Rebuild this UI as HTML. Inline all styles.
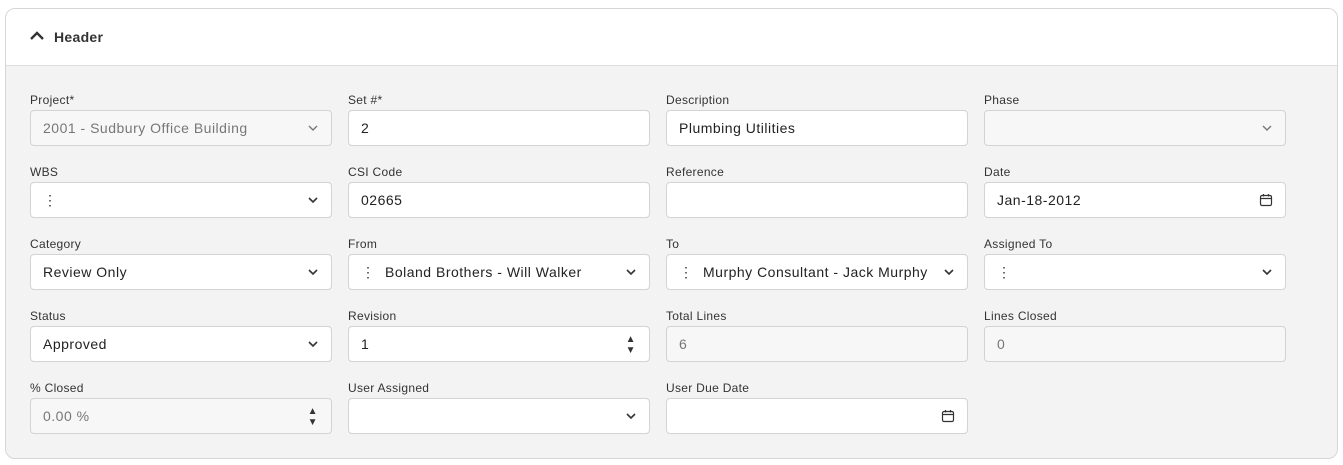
<!DOCTYPE html>
<html><head><style>
*{box-sizing:border-box;margin:0;padding:0}
body{width:1343px;height:465px;background:#fff;font-family:"Liberation Sans",Arial,sans-serif;position:relative;overflow:hidden}
.card{position:absolute;left:5px;top:8px;width:1333px;height:451px;border:1px solid #d6d6d6;border-radius:10px;background:#f3f3f3;overflow:hidden}
.hdr{position:absolute;left:0;top:0;right:0;height:57px;background:#fff;border-bottom:1px solid #dedede}
.hdr span{position:absolute;left:48px;top:20px;font-size:14px;font-weight:bold;color:#333;letter-spacing:0.3px}
.hdr svg{position:absolute;left:23px;top:21px}
.lab{position:absolute;font-size:12px;color:#333;letter-spacing:0.3px}
.inp{position:absolute;width:302px;height:36px;background:#fff;border:1px solid #d3d3d3;border-radius:4px;font-size:14px;color:#222;padding:0 12px;line-height:34px;letter-spacing:0.5px}
.dis{background:#f7f7f7;color:#777}
.chev{position:absolute;right:12px;top:12px}
.dots{display:inline-block;width:10px;margin-right:14px;color:#333}
.spin{position:absolute;right:13px;top:7px;font-size:10px;line-height:11px;color:#333}
.cal{position:absolute;right:12px;top:10px}
</style></head><body>
<div class="card">
<div class="hdr"><svg width="16" height="12" viewBox="0 0 16 12"><path d="M2 9 L8 3 L14 9" stroke="#333" stroke-width="2.4" fill="none"/></svg><span>Header</span></div>
</div>
<div class="lab" style="left:30px;top:93px">Project*</div>
<div class="inp dis" style="left:30px;top:110px">2001 - Sudbury Office Building<svg class="chev" width="12" height="10" viewBox="0 0 12 10"><path d="M2 3 L6 7 L10 3" stroke="#777" stroke-width="1.4" fill="none"/></svg></div>
<div class="lab" style="left:348px;top:93px">Set #*</div>
<div class="inp" style="left:348px;top:110px">2</div>
<div class="lab" style="left:666px;top:93px">Description</div>
<div class="inp" style="left:666px;top:110px">Plumbing Utilities</div>
<div class="lab" style="left:984px;top:93px">Phase</div>
<div class="inp dis" style="left:984px;top:110px"><svg class="chev" width="12" height="10" viewBox="0 0 12 10"><path d="M2 3 L6 7 L10 3" stroke="#777" stroke-width="1.4" fill="none"/></svg></div>
<div class="lab" style="left:30px;top:165px">WBS</div>
<div class="inp" style="left:30px;top:182px"><span class="dots">⋮</span><svg class="chev" width="12" height="10" viewBox="0 0 12 10"><path d="M2 3 L6 7 L10 3" stroke="#333" stroke-width="1.6" fill="none"/></svg></div>
<div class="lab" style="left:348px;top:165px">CSI Code</div>
<div class="inp" style="left:348px;top:182px">02665</div>
<div class="lab" style="left:666px;top:165px">Reference</div>
<div class="inp" style="left:666px;top:182px"></div>
<div class="lab" style="left:984px;top:165px">Date</div>
<div class="inp" style="left:984px;top:182px">Jan-18-2012<svg class="cal" width="14" height="14" viewBox="0 0 14 14"><rect x="1.5" y="2.5" width="11" height="10" rx="1.5" stroke="#333" stroke-width="1.2" fill="none"/><path d="M1.5 5.5H12.5M4.5 1V3.5M9.5 1V3.5" stroke="#333" stroke-width="1.2"/></svg></div>
<div class="lab" style="left:30px;top:237px">Category</div>
<div class="inp" style="left:30px;top:254px">Review Only<svg class="chev" width="12" height="10" viewBox="0 0 12 10"><path d="M2 3 L6 7 L10 3" stroke="#333" stroke-width="1.6" fill="none"/></svg></div>
<div class="lab" style="left:348px;top:237px">From</div>
<div class="inp" style="left:348px;top:254px"><span class="dots">⋮</span>Boland Brothers - Will Walker<svg class="chev" width="12" height="10" viewBox="0 0 12 10"><path d="M2 3 L6 7 L10 3" stroke="#333" stroke-width="1.6" fill="none"/></svg></div>
<div class="lab" style="left:666px;top:237px">To</div>
<div class="inp" style="left:666px;top:254px"><span class="dots">⋮</span>Murphy Consultant - Jack Murphy<svg class="chev" width="12" height="10" viewBox="0 0 12 10"><path d="M2 3 L6 7 L10 3" stroke="#333" stroke-width="1.6" fill="none"/></svg></div>
<div class="lab" style="left:984px;top:237px">Assigned To</div>
<div class="inp" style="left:984px;top:254px"><span class="dots">⋮</span><svg class="chev" width="12" height="10" viewBox="0 0 12 10"><path d="M2 3 L6 7 L10 3" stroke="#333" stroke-width="1.6" fill="none"/></svg></div>
<div class="lab" style="left:30px;top:309px">Status</div>
<div class="inp" style="left:30px;top:326px">Approved<svg class="chev" width="12" height="10" viewBox="0 0 12 10"><path d="M2 3 L6 7 L10 3" stroke="#333" stroke-width="1.6" fill="none"/></svg></div>
<div class="lab" style="left:348px;top:309px">Revision</div>
<div class="inp" style="left:348px;top:326px">1<div class="spin">▲<br>▼</div></div>
<div class="lab" style="left:666px;top:309px">Total Lines</div>
<div class="inp dis" style="left:666px;top:326px">6</div>
<div class="lab" style="left:984px;top:309px">Lines Closed</div>
<div class="inp dis" style="left:984px;top:326px">0</div>
<div class="lab" style="left:30px;top:381px">% Closed</div>
<div class="inp dis" style="left:30px;top:398px">0.00 %<div class="spin">▲<br>▼</div></div>
<div class="lab" style="left:348px;top:381px">User Assigned</div>
<div class="inp" style="left:348px;top:398px"><svg class="chev" width="12" height="10" viewBox="0 0 12 10"><path d="M2 3 L6 7 L10 3" stroke="#333" stroke-width="1.6" fill="none"/></svg></div>
<div class="lab" style="left:666px;top:381px">User Due Date</div>
<div class="inp" style="left:666px;top:398px"><svg class="cal" width="14" height="14" viewBox="0 0 14 14"><rect x="1.5" y="2.5" width="11" height="10" rx="1.5" stroke="#333" stroke-width="1.2" fill="none"/><path d="M1.5 5.5H12.5M4.5 1V3.5M9.5 1V3.5" stroke="#333" stroke-width="1.2"/></svg></div>
</body></html>
